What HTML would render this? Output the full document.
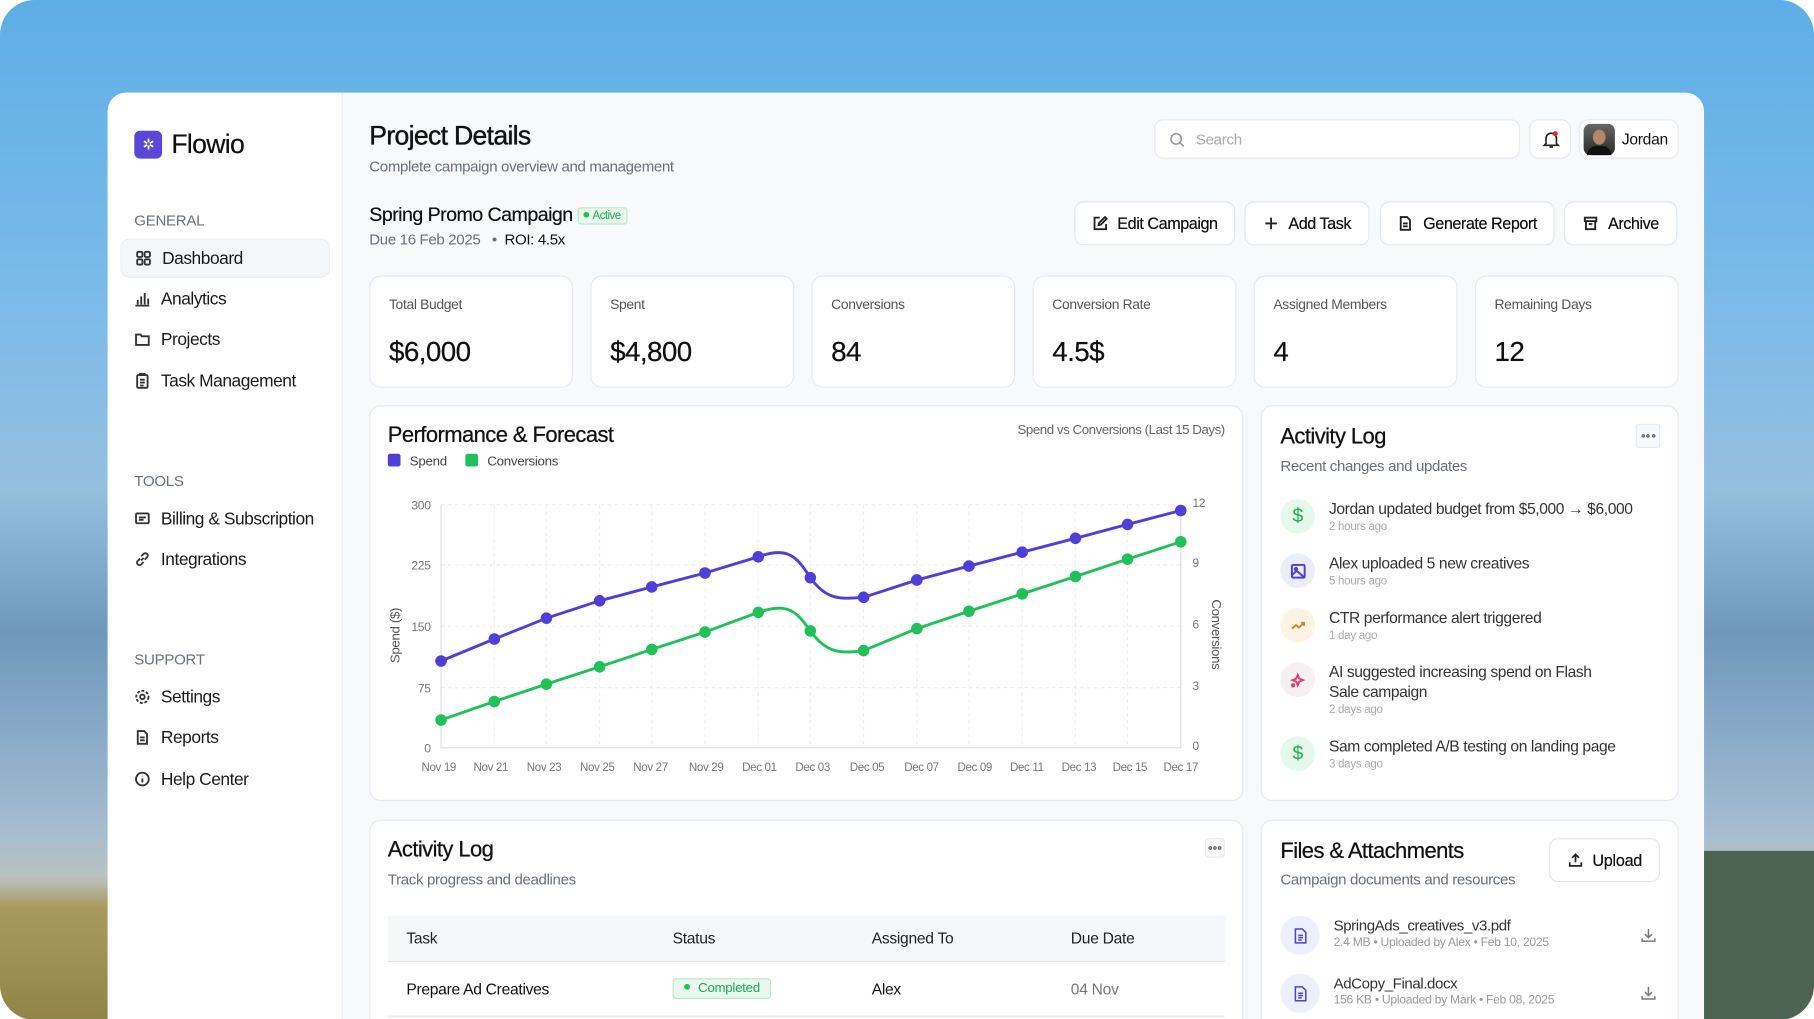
<!DOCTYPE html>
<html><head><meta charset="utf-8">
<style>
*{box-sizing:border-box;margin:0;padding:0}
html,body{width:1814px;height:1019px;overflow:hidden;background:#fff;font-family:"Liberation Sans",sans-serif;color:#111;letter-spacing:-0.25px}
#s{width:1567px;height:881px;transform:scale(1.15763);transform-origin:0 0;position:relative}
.bg{position:absolute;left:0;top:0;width:1567px;height:881px;border-radius:30px;overflow:hidden;
background:linear-gradient(180deg,#5eaee6 0%,#7cbbe9 30%,#95bfdf 48%,#6f98bb 62%,#8eaecb 74%,#a7bdd0 82%,#b9c2c0 86%,#a99a5c 89%,#8f8547 100%)}
.bg .gr{position:absolute;right:0;top:735px;width:110px;height:146px;background:#4e6453}
.app{position:absolute;left:93px;top:80px;width:1379px;height:801px;background:#f8f9fb;border-radius:16px 16px 0 0;overflow:hidden}
.side{position:absolute;left:0;top:0;width:203px;height:100%;background:#fff;border-right:1px solid #eceef2}
.logo{position:absolute;left:23px;top:31px;display:flex;align-items:center;gap:8px;font-size:23px;letter-spacing:-0.6px;text-shadow:0 0 .4px #111}
.logo i{width:24px;height:24px;border-radius:5px;background:#5b46d8;display:flex;align-items:center;justify-content:center;color:#fff;font-style:normal;font-size:13px}
.sec{position:absolute;left:23px;font-size:13px;color:#6b6f76}
.nav{position:absolute;left:11px;width:181px;height:34px;display:flex;align-items:center;padding-left:12px;gap:9px;font-size:15px;color:#1a1a1a;border-radius:8px;letter-spacing:-0.4px}
.nav.act{background:#f5f6f8;border:1px solid #eceef1}
.nav svg{width:14px;height:14px;fill:none;stroke:#333;stroke-width:1.6}
.abs{position:absolute}
.h1{left:226px;top:24px;font-size:23px;letter-spacing:-0.6px;text-shadow:0 0 .6px #111,0 0 .3px #111}
.sub{color:#6b6f76;font-size:13px;letter-spacing:-0.3px}
.box{position:absolute;background:#fff;border:1px solid #e7e9ed;border-radius:10px}
.btn{position:absolute;top:94px;height:38px;background:#fff;border:1px solid #e4e6ea;border-radius:8px;display:flex;align-items:center;justify-content:center;gap:8px;font-size:14px;letter-spacing:-0.4px;text-shadow:0 0 .3px #111}
.btn svg{width:14px;height:14px;fill:none;stroke:#222;stroke-width:1.6}
.stat .l{position:absolute;left:16px;top:17px;font-size:12px;color:#555;letter-spacing:-0.3px}
.stat .v{position:absolute;left:16px;top:52px;font-size:24px;letter-spacing:-0.5px;text-shadow:0 0 .4px #111}
.ct{font-size:19px;letter-spacing:-0.5px;text-shadow:0 0 .5px #111}
.item{position:absolute;left:16px;display:flex;gap:12px}
.ic{width:30px;height:30px;border-radius:50%;display:flex;align-items:center;justify-content:center;flex:none}
.ic svg{width:15px;height:15px;fill:none;stroke-width:1.7}
.it1{font-size:13.5px;color:#333;line-height:17px;letter-spacing:-0.35px}
.it2{font-size:10px;color:#aaa;margin-top:2px}
.dots{position:absolute;border:1px solid #e7e9ed;border-radius:3px;background:#f8f9fb;display:flex;align-items:center;justify-content:center;gap:1.5px}
.dots b{width:3px;height:3px;border-radius:50%;border:1px solid #555}
</style></head><body><div id="s">
<div class="bg"><div class="gr"></div></div>
<div class="app">
 <div class="side">
  <div class="logo"><i>✲</i>Flowio</div>
  <div class="sec" style="top:103px">GENERAL</div>
  <div class="nav act" style="top:126px"><svg viewBox="0 0 14 14"><rect x="1.5" y="1.5" width="4.5" height="4.5" rx="1"/><rect x="8" y="1.5" width="4.5" height="4.5" rx="1"/><rect x="1.5" y="8" width="4.5" height="4.5" rx="1"/><rect x="8" y="8" width="4.5" height="4.5" rx="1"/></svg>Dashboard</div>
  <div class="nav" style="top:161px"><svg viewBox="0 0 14 14"><path d="M1 13h12M3 12V8M6 12V5M9 12V2M12 12V7"/></svg>Analytics</div>
  <div class="nav" style="top:196px"><svg viewBox="0 0 14 14"><path d="M1.5 3h4l1 1.5h6v7.5h-11z"/></svg>Projects</div>
  <div class="nav" style="top:232px"><svg viewBox="0 0 14 14"><rect x="2.5" y="2" width="9" height="11" rx="1"/><path d="M5 2V1h4v1M5 6h4M5 8.5h4M5 11h3"/></svg>Task Management</div>
  <div class="sec" style="top:328px">TOOLS</div>
  <div class="nav" style="top:351px"><svg viewBox="0 0 14 14"><rect x="1.5" y="2.5" width="11" height="8.5" rx="1"/><path d="M4 6h6M4 8h4"/></svg>Billing &amp; Subscription</div>
  <div class="nav" style="top:386px"><svg viewBox="0 0 14 14"><path d="M6 8l2-2M5 6.5L3 8.5a2 2 0 003 3L8 9.5M9 7.5l2-2a2 2 0 00-3-3L6 4.5"/></svg>Integrations</div>
  <div class="sec" style="top:482px">SUPPORT</div>
  <div class="nav" style="top:505px"><svg viewBox="0 0 14 14"><circle cx="7" cy="7" r="2"/><circle cx="7" cy="7" r="5.3" stroke-dasharray="2.5 1.5"/></svg>Settings</div>
  <div class="nav" style="top:540px"><svg viewBox="0 0 14 14"><path d="M3 1.5h5.5l2.5 2.5v8.5H3zM5 7h4M5 9.5h4"/></svg>Reports</div>
  <div class="nav" style="top:576px"><svg viewBox="0 0 14 14"><circle cx="7" cy="7" r="5.5"/><path d="M7 6.5v3.5M7 4.2v.3"/></svg>Help Center</div>
 </div>

 <div class="abs h1">Project Details</div>
 <div class="abs sub" style="left:226px;top:56px">Complete campaign overview and management</div>
 <div class="box" style="left:904px;top:23px;width:316px;height:34px;border-radius:8px"><svg style="position:absolute;left:12px;top:10px" width="14" height="14" viewBox="0 0 14 14" fill="none" stroke="#999" stroke-width="1.4"><circle cx="6" cy="6" r="4.5"/><path d="M9.5 9.5l3 3"/></svg><span style="position:absolute;left:35px;top:9px;font-size:13px;color:#aaa">Search</span></div>
 <div class="box" style="left:1228px;top:23px;width:36px;height:34px;border-radius:8px"><svg style="position:absolute;left:10px;top:8px" width="16" height="17" viewBox="0 0 16 17" fill="none" stroke="#222" stroke-width="1.4"><path d="M3.5 12V7.5a4.5 4.5 0 019 0V12l1.5 1.5H2zM6.5 15h3"/><circle cx="11.5" cy="3.5" r="2.2" fill="#e52b2b" stroke="none"/></svg></div>
 <div class="box" style="left:1271px;top:23px;width:86px;height:34px;border-radius:8px"><div style="position:absolute;left:3px;top:3px;width:27px;height:27px;border-radius:6px;background:linear-gradient(#666,#2a2a2a)"><div style="position:absolute;left:8px;top:5px;width:11px;height:13px;border-radius:50%;background:#b58767"></div><div style="position:absolute;left:3px;top:19px;width:21px;height:8px;border-radius:8px 8px 0 0;background:#111"></div></div><span style="position:absolute;left:36px;top:9px;font-size:13.5px">Jordan</span></div>

 <div class="abs" style="left:226px;top:96px;font-size:17px;letter-spacing:-0.5px;text-shadow:0 0 .3px #111">Spring Promo Campaign <span style="display:inline-block;vertical-align:2px;font-size:10px;color:#22a852;background:#e8f8ed;border:1px solid #b6ebc6;border-radius:3px;padding:1px 5px 1px 4px;text-shadow:none"><span style="display:inline-block;width:5px;height:5px;border-radius:50%;background:#22c05a;vertical-align:1px;margin-right:3px"></span>Active</span></div>
 <div class="abs" style="left:226px;top:119px;font-size:13px;color:#6b6f76;letter-spacing:-0.3px">Due 16 Feb 2025 &nbsp; • &nbsp;<span style="color:#111">ROI: 4.5x</span></div>

 <div class="btn" style="left:835px;width:139px"><svg viewBox="0 0 14 14"><path d="M7 2H2.5v10h10V7.5M6 8.5l.5-2 5-5 1.5 1.5-5 5z"/></svg>Edit Campaign</div>
 <div class="btn" style="left:982px;width:108px"><svg viewBox="0 0 14 14"><path d="M7 2v10M2 7h10"/></svg>Add Task</div>
 <div class="btn" style="left:1099px;width:151px"><svg viewBox="0 0 14 14"><path d="M3 1.5h5.5l2.5 2.5v8.5H3zM5 7h4M5 9.5h4"/></svg>Generate Report</div>
 <div class="btn" style="left:1258px;width:98px"><svg viewBox="0 0 14 14"><rect x="2" y="2" width="10" height="3"/><path d="M3 5v7h8V5M5.5 7.5h3"/></svg>Archive</div>

 <div class="box stat" style="left:226px;top:158px;width:176px;height:97px"><div class="l">Total Budget</div><div class="v">$6,000</div></div>
 <div class="box stat" style="left:417px;top:158px;width:176px;height:97px"><div class="l">Spent</div><div class="v">$4,800</div></div>
 <div class="box stat" style="left:608px;top:158px;width:176px;height:97px"><div class="l">Conversions</div><div class="v">84</div></div>
 <div class="box stat" style="left:799px;top:158px;width:176px;height:97px"><div class="l">Conversion Rate</div><div class="v">4.5$</div></div>
 <div class="box stat" style="left:990px;top:158px;width:176px;height:97px"><div class="l">Assigned Members</div><div class="v">4</div></div>
 <div class="box stat" style="left:1181px;top:158px;width:176px;height:97px"><div class="l">Remaining Days</div><div class="v">12</div></div>

 <div class="box" style="left:226px;top:270px;width:755px;height:342px">
  <div class="abs ct" style="left:15px;top:15px">Performance &amp; Forecast</div>
  <div class="abs" style="left:15px;top:41px;font-size:11.5px;color:#444"><span style="display:inline-block;width:11px;height:11px;background:#4f3fd6;border-radius:2px;vertical-align:-1px;margin-right:8px"></span>Spend <span style="display:inline-block;width:11px;height:11px;background:#22c05a;border-radius:2px;vertical-align:-1px;margin:0 8px 0 13px"></span>Conversions</div>
  <div class="abs" style="right:15px;top:15px;font-size:11.5px;color:#666;letter-spacing:-0.4px">Spend vs Conversions (Last 15 Days)</div>
 </div>
 <svg class="abs" style="left:0;top:0" width="1379" height="801" viewBox="93 80 1379 801" font-family="Liberation Sans" font-size="10.5" fill="#777" letter-spacing="-0.3">
  <g stroke="#eee" stroke-dasharray="3 3">
   <path d="M381 436H1020M381 488H1020M381 541H1020M381 594H1020"/>
   <path d="M427 436V646M472 436V646M518 436V646M563 436V646M609 436V646M655 436V646M700 436V646M746 436V646M792 436V646M837 436V646M883 436V646M929 436V646M974 436V646"/>
  </g>
  <path d="M381 436V646H1020V436" stroke="#ddd" fill="none"/>
  <g text-anchor="end"><text x="372" y="440">300</text><text x="372" y="492">225</text><text x="372" y="545">150</text><text x="372" y="598">75</text><text x="372" y="650">0</text></g>
  <g><text x="1030" y="438">12</text><text x="1030" y="490">9</text><text x="1030" y="543">6</text><text x="1030" y="596">3</text><text x="1030" y="648">0</text></g>
  <text transform="translate(345 549) rotate(-90)" text-anchor="middle" font-size="11.5" fill="#555">Spend ($)</text>
  <text transform="translate(1047 548) rotate(90)" text-anchor="middle" font-size="11.5" fill="#555">Conversions</text>
  <g text-anchor="middle" font-size="10"><text x="379" y="666">Nov 19</text><text x="424" y="666">Nov 21</text><text x="470" y="666">Nov 23</text><text x="516" y="666">Nov 25</text><text x="562" y="666">Nov 27</text><text x="610" y="666">Nov 29</text><text x="656" y="666">Dec 01</text><text x="702" y="666">Dec 03</text><text x="749" y="666">Dec 05</text><text x="796" y="666">Dec 07</text><text x="842" y="666">Dec 09</text><text x="887" y="666">Dec 11</text><text x="932" y="666">Dec 13</text><text x="976" y="666">Dec 15</text><text x="1020" y="666">Dec 17</text></g>
  <path d="M381 571L427 552L472 534L518 519L563 507L609 495L655 481C680 472 688 480 700 499C715 520 728 517 746 516L792 501L837 489L883 477L929 465L974 453L1020 441" fill="none" stroke="#4f3fd6" stroke-width="2.5"/>
  <path d="M381 622L427 606L472 591L518 576L563 561L609 546L655 529C680 520 688 528 700 545C715 566 728 564 746 562L792 543L837 528L883 513L929 498L974 483L1020 468" fill="none" stroke="#22c05a" stroke-width="2.5"/>
  <g fill="#4f3fd6"><circle cx="381" cy="571" r="5"/><circle cx="427" cy="552" r="5"/><circle cx="472" cy="534" r="5"/><circle cx="518" cy="519" r="5"/><circle cx="563" cy="507" r="5"/><circle cx="609" cy="495" r="5"/><circle cx="655" cy="481" r="5"/><circle cx="700" cy="499" r="5"/><circle cx="746" cy="516" r="5"/><circle cx="792" cy="501" r="5"/><circle cx="837" cy="489" r="5"/><circle cx="883" cy="477" r="5"/><circle cx="929" cy="465" r="5"/><circle cx="974" cy="453" r="5"/><circle cx="1020" cy="441" r="5"/></g>
  <g fill="#22c05a"><circle cx="381" cy="622" r="5"/><circle cx="427" cy="606" r="5"/><circle cx="472" cy="591" r="5"/><circle cx="518" cy="576" r="5"/><circle cx="563" cy="561" r="5"/><circle cx="609" cy="546" r="5"/><circle cx="655" cy="529" r="5"/><circle cx="700" cy="545" r="5"/><circle cx="746" cy="562" r="5"/><circle cx="792" cy="543" r="5"/><circle cx="837" cy="528" r="5"/><circle cx="883" cy="513" r="5"/><circle cx="929" cy="498" r="5"/><circle cx="974" cy="483" r="5"/><circle cx="1020" cy="468" r="5"/></g>
 </svg>

 <div class="box" style="left:996px;top:270px;width:361px;height:342px">
  <div class="abs ct" style="left:16px;top:16px">Activity Log</div>
  <div class="abs sub" style="left:16px;top:44px">Recent changes and updates</div>
  <div class="dots" style="right:15px;top:15px;width:21px;height:21px"><b></b><b></b><b></b></div>
  <div class="item" style="top:80px"><div class="ic" style="background:#e6f8ec;color:#22b04f;font-size:17px">$</div><div><div class="it1">Jordan updated budget from $5,000 → $6,000</div><div class="it2">2 hours ago</div></div></div>
  <div class="item" style="top:127px"><div class="ic" style="background:#ecedfb"><svg viewBox="0 0 15 15" stroke="#4f3fd6"><rect x="2" y="2" width="11" height="11" rx="1"/><circle cx="5.5" cy="5.5" r="1"/><path d="M2 11l4-4 7 6"/></svg></div><div><div class="it1">Alex uploaded 5 new creatives</div><div class="it2">5 hours ago</div></div></div>
  <div class="item" style="top:174px"><div class="ic" style="background:#fdf3e4"><svg viewBox="0 0 15 15" stroke="#c88a3a"><path d="M2 10l3.5-3 2.5 2 4.5-4M10 5h2.5v2.5"/></svg></div><div><div class="it1">CTR performance alert triggered</div><div class="it2">1 day ago</div></div></div>
  <div class="item" style="top:221px"><div class="ic" style="background:#f5f1f2"><svg viewBox="0 0 15 15" stroke="#e0407a"><path d="M7 3l1.3 3.2L11.5 7.5 8.3 8.8 7 12 5.7 8.8 2.5 7.5 5.7 6.2z"/><circle cx="3" cy="12" r="1"/></svg></div><div><div class="it1">AI suggested increasing spend on Flash<br>Sale campaign</div><div class="it2">2 days ago</div></div></div>
  <div class="item" style="top:285px"><div class="ic" style="background:#e6f8ec;color:#22b04f;font-size:17px">$</div><div><div class="it1">Sam completed A/B testing on landing page</div><div class="it2">3 days ago</div></div></div>
 </div>

 <div class="box" style="left:226px;top:628px;width:755px;height:200px">
  <div class="abs ct" style="left:15px;top:15px">Activity Log</div>
  <div class="abs sub" style="left:15px;top:43px">Track progress and deadlines</div>
  <div class="dots" style="right:15px;top:15px;width:17px;height:17px"><b style="width:2.5px;height:2.5px"></b><b style="width:2.5px;height:2.5px"></b><b style="width:2.5px;height:2.5px"></b></div>
  <div class="abs" style="left:15px;top:82px;width:723px;height:40px;background:#f6f7f9;border-bottom:1px solid #e4e6ea;font-size:13.5px;color:#222">
   <span class="abs" style="left:16px;top:12px">Task</span><span class="abs" style="left:246px;top:12px">Status</span><span class="abs" style="left:418px;top:12px">Assigned To</span><span class="abs" style="left:590px;top:12px">Due Date</span></div>
  <div class="abs" style="left:15px;top:122px;width:723px;height:48px;border-bottom:2px solid #eceef1;font-size:13.5px;color:#111">
   <span class="abs" style="left:16px;top:16px">Prepare Ad Creatives</span>
   <span class="abs" style="left:246px;top:14px;font-size:11.5px;color:#22a852;background:#e8f8ed;border:1px solid #b6ebc6;border-radius:3px;padding:2px 9px"><span style="display:inline-block;width:5px;height:5px;border-radius:50%;background:#22c05a;vertical-align:2px;margin-right:7px"></span>Completed</span>
   <span class="abs" style="left:418px;top:16px">Alex</span><span class="abs" style="left:590px;top:16px;color:#777">04 Nov</span></div>
 </div>

 <div class="box" style="left:996px;top:628px;width:361px;height:200px">
  <div class="abs ct" style="left:16px;top:16px">Files &amp; Attachments</div>
  <div class="abs sub" style="left:16px;top:43px">Campaign documents and resources</div>
  <div class="abs" style="left:248px;top:15px;width:96px;height:38px;border:1px solid #e4e6ea;border-radius:8px;font-size:14px;display:flex;align-items:center;justify-content:center;gap:8px;text-shadow:0 0 .3px #111"><svg width="14" height="14" viewBox="0 0 14 14" fill="none" stroke="#222" stroke-width="1.5"><path d="M7 9V2M4 5l3-3 3 3M2 9v3h10V9"/></svg>Upload</div>
  <div class="item" style="top:82px"><div class="ic" style="width:34px;height:34px;background:#eeeffc"><svg viewBox="0 0 15 15" stroke="#4f3fd6" style="stroke-width:1.3"><path d="M3 1.5h6l3 3v9H3zM5.5 7h4M5.5 9h4M5.5 11h3"/></svg></div><div><div class="it1" style="font-size:13px">SpringAds_creatives_v3.pdf</div><div class="it2" style="font-size:10.5px;color:#999;margin-top:0">2.4 MB • Uploaded by Alex • Feb 10, 2025</div></div></div>
  <div class="item" style="top:132px"><div class="ic" style="width:34px;height:34px;background:#eeeffc"><svg viewBox="0 0 15 15" stroke="#4f3fd6" style="stroke-width:1.3"><path d="M3 1.5h6l3 3v9H3zM5.5 7h4M5.5 9h4M5.5 11h3"/></svg></div><div><div class="it1" style="font-size:13px">AdCopy_Final.docx</div><div class="it2" style="font-size:10.5px;color:#999;margin-top:0">156 KB • Uploaded by Mark • Feb 08, 2025</div></div></div>
  <svg class="abs" style="left:327px;top:92px" width="14" height="14" viewBox="0 0 14 14" fill="none" stroke="#777" stroke-width="1.3"><path d="M7 1.5v7M4 6l3 3 3-3M1.5 9.5V12h11V9.5"/></svg>
  <svg class="abs" style="left:327px;top:142px" width="14" height="14" viewBox="0 0 14 14" fill="none" stroke="#777" stroke-width="1.3"><path d="M7 1.5v7M4 6l3 3 3-3M1.5 9.5V12h11V9.5"/></svg>
 </div>
</div>
</div></body></html>
